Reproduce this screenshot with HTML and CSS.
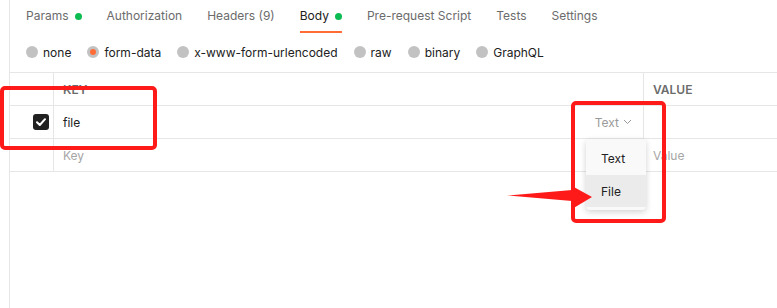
FILE: index.html
```html
<!DOCTYPE html>
<html lang="en">
<head>
  <meta charset="UTF-8">
  <title>Body - form-data</title>
  <link rel="stylesheet" href="styles.css">
</head>
<body>
  <div class="pane">
    <div class="tabs">
      <span class="tab">Params <i class="dot"></i></span>
      <span class="tab">Authorization</span>
      <span class="tab">Headers (9)</span>
      <span class="tab active">Body <i class="dot"></i></span>
      <span class="tab">Pre-request Script</span>
      <span class="tab">Tests</span>
      <span class="tab">Settings</span>
    </div>

    <div class="modes">
      <label class="mode"><i class="radio"></i>none</label>
      <label class="mode"><i class="radio on"></i>form-data</label>
      <label class="mode"><i class="radio"></i>x-www-form-urlencoded</label>
      <label class="mode"><i class="radio"></i>raw</label>
      <label class="mode"><i class="radio"></i>binary</label>
      <label class="mode"><i class="radio"></i>GraphQL</label>
    </div>

    <div class="table">
      <div class="row head">
        <div class="cell check"></div>
        <div class="cell key">KEY</div>
        <div class="cell value">VALUE</div>
      </div>
      <div class="row">
        <div class="cell check">
          <span class="checkbox">
            <svg width="10" height="8" viewBox="0 0 10 8"><path d="M1 4.2 L3.8 7 L9 1.2" fill="none" stroke="#fff" stroke-width="2" stroke-linecap="round" stroke-linejoin="round"/></svg>
          </span>
        </div>
        <div class="cell key">
          <span>file</span>
          <span class="type">Text
            <svg width="9" height="6" viewBox="0 0 9 6"><path d="M1 1 L4.5 4.5 L8 1" fill="none" stroke="#9a9a9a" stroke-width="1"/></svg>
          </span>
        </div>
        <div class="cell value"></div>
      </div>
      <div class="row">
        <div class="cell check"></div>
        <div class="cell key placeholder">Key</div>
        <div class="cell value placeholder">Value</div>
      </div>
    </div>
  </div>

  <div class="menu">
    <div class="menu-item">Text</div>
    <div class="menu-item hover">File</div>
  </div>

  <div class="mark mark-key"></div>
  <div class="mark mark-type"></div>
  <svg class="arrow" width="100" height="30" viewBox="500 182 100 30">
    <polygon points="507,195.5 572,190 572,186 592,197 572,209 572,201" fill="#ff1a1a"/>
  </svg>
</body>
</html>
```

FILE: styles.css
```css
body {
  margin: 0;
  background: #fff;
  font-family: Inter, "Noto Sans", sans-serif;
  font-size: 12px;
  color: #212121;
  height: 308px;
  overflow: hidden;
}
.pane {
  margin-left: 9px;
  border-left: 1px solid #e6e6e6;
  height: 308px;
}
.tabs {
  display: flex;
  padding: 7px 0 0 16px;
  height: 25px;
}
.tab {
  color: #6b6b6b;
  margin-right: 25px;
  height: 24px;
  line-height: 18px;
  display: flex;
  align-items: flex-start;
  gap: 6px;
}
.tab.active {
  color: #212121;
  border-bottom: 2px solid #ff6c37;
}
.dot {
  width: 7px;
  height: 7px;
  border-radius: 50%;
  background: #0cbb52;
  margin-top: 6px;
}
.modes {
  display: flex;
  padding: 11px 0 0 16px;
  height: 29px;
}
.mode {
  display: flex;
  align-items: center;
  gap: 5px;
  margin-right: 16px;
  height: 18px;
  color: #212121;
}
.radio {
  width: 12px;
  height: 12px;
  border-radius: 50%;
  background: #c2c2c2;
  box-sizing: border-box;
}
.radio.on {
  background: #ff6c37;
  border: 3px solid #c2c2c2;
}
.table {
  border-top: 1px solid #e6e6e6;
}
.row {
  display: flex;
  height: 32px;
  border-bottom: 1px solid #e6e6e6;
}
.cell {
  display: flex;
  align-items: center;
  padding-left: 9px;
  box-sizing: border-box;
}
.check {
  width: 44px;
  padding-left: 23px;
  border-right: 1px solid #e6e6e6;
}
.key {
  width: 590px;
  border-right: 1px solid #e6e6e6;
  justify-content: space-between;
  padding-right: 11px;
}
.value {
  flex: 1;
}
.head .cell {
  font-size: 12px;
  font-weight: 600;
  color: #6b6b6b;
}
.checkbox {
  width: 16px;
  height: 16px;
  border-radius: 3px;
  background: #212121;
  display: flex;
  align-items: center;
  justify-content: center;
}
.type {
  color: #9a9a9a;
  display: flex;
  align-items: center;
  gap: 4px;
}
.placeholder {
  color: #a6a6a6;
}
.menu {
  position: absolute;
  left: 586px;
  top: 139px;
  width: 60px;
  background: #f9f9f9;
  border-radius: 4px;
  box-shadow: 0 2px 6px rgba(0, 0, 0, 0.18);
  padding: 2px 0 3px;
}
.menu-item {
  height: 34px;
  line-height: 36px;
  padding-left: 15px;
  color: #212121;
}
.menu-item.hover {
  height: 32px;
  line-height: 34px;
  background: #ebebeb;
}
.mark {
  position: absolute;
  border: 4px solid #ff1a1a;
  border-radius: 5px;
  box-sizing: border-box;
}
.mark-key {
  left: 0;
  top: 86px;
  width: 157px;
  height: 64px;
}
.mark-type {
  left: 571px;
  top: 101px;
  width: 95px;
  height: 122px;
}
.arrow {
  position: absolute;
  left: 500px;
  top: 182px;
}
```
